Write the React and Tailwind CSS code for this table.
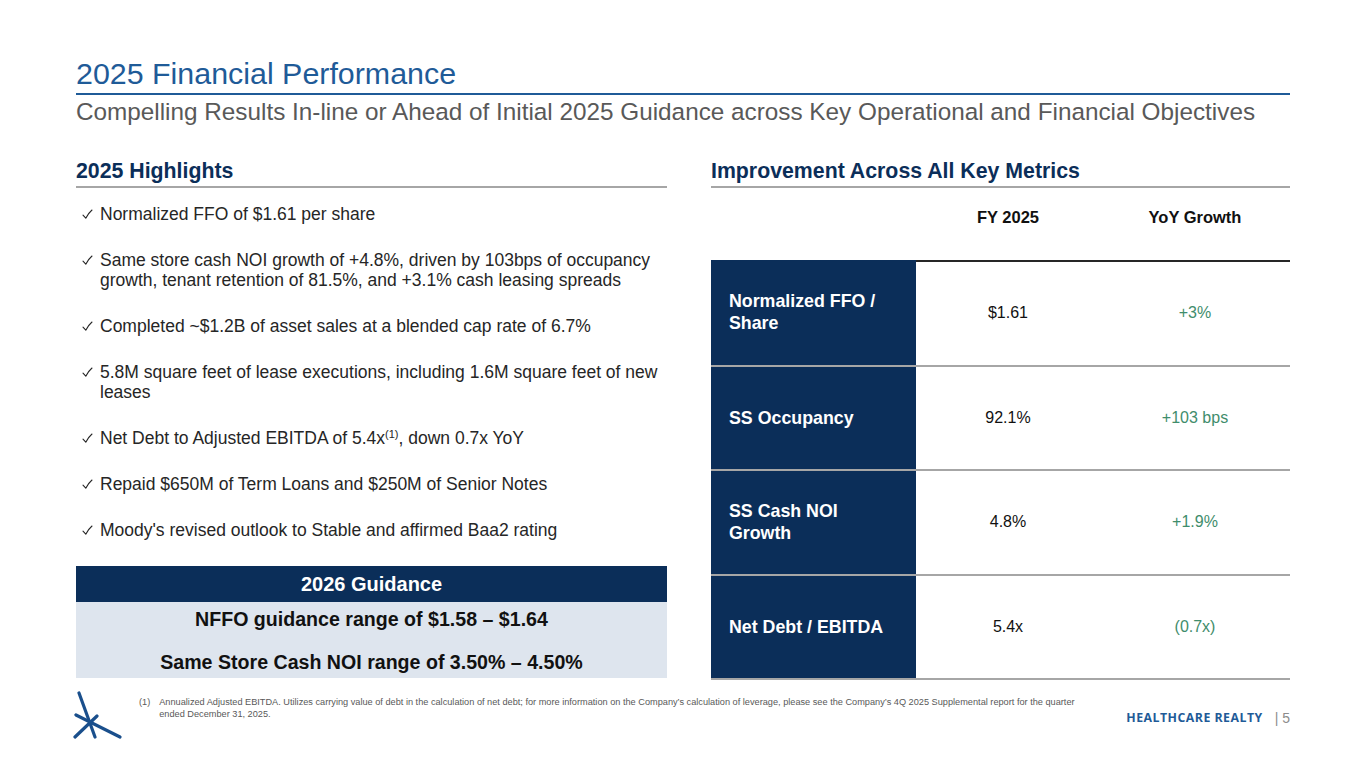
import React from 'react';

const navy = 'bg-[#0b2e59]';

const highlights = [
    ['Normalized FFO of $1.61 per share'],
    ['Same store cash NOI growth of +4.8%, driven by 103bps of occupancy', 'growth, tenant retention of 81.5%, and +3.1% cash leasing spreads'],
    ['Completed ~$1.2B of asset sales at a blended cap rate of 6.7%'],
    ['5.8M square feet of lease executions, including 1.6M square feet of new', 'leases'],
    'ebitda',
    ['Repaid $650M of Term Loans and $250M of Senior Notes'],
    ["Moody's revised outlook to Stable and affirmed Baa2 rating"],
];

const metrics = [
    { label: ['Normalized FFO /', 'Share'], value: '$1.61', growth: '+3%' },
    { label: ['SS Occupancy'], value: '92.1%', growth: '+103 bps' },
    { label: ['SS Cash NOI', 'Growth'], value: '4.8%', growth: '+1.9%' },
    { label: ['Net Debt / EBITDA'], value: '5.4x', growth: '(0.7x)' },
];

const Check = () => (
    <svg width="11" height="11" viewBox="0 0 11 11" className="mt-[5px] shrink-0">
        <path d="M1 6.2 L3.8 9.2 Q6 4.5 10 1" fill="none" stroke="#262626" strokeWidth="1.1" strokeLinecap="round" strokeLinejoin="round" />
    </svg>
);

const Logo = () => (
    <svg width="50" height="50" viewBox="0 0 50 50" className="shrink-0">
        <g stroke="#1a4f8c" strokeWidth="3.2" strokeLinecap="round">
            <line x1="6" y1="2" x2="22" y2="46" />
            <line x1="2" y1="46" x2="24" y2="25" />
            <line x1="3" y1="24" x2="47" y2="46" />
        </g>
    </svg>
);

export default function App() {
    return (
        <div className="w-[1365px] h-[767px] bg-white overflow-hidden font-['Liberation_Sans',Arial,sans-serif] flex flex-col">
            {/* Title */}
            <div className="pl-[76px] pr-[75px] pt-[56px]">
                <h1 className="text-[30.4px] leading-[34px] text-[#1f5b98] pb-[3px] border-b-2 border-[#1f5b98]">2025 Financial Performance</h1>
                <p className="mt-[3px] text-[24.3px] leading-[28px] text-[#595959] whitespace-nowrap">
                    Compelling Results In-line or Ahead of Initial 2025 Guidance across Key Operational and Financial Objectives
                </p>
            </div>

            <div className="pl-[76px] pr-[75px] mt-[33px] flex gap-[44px]">
                {/* Left column */}
                <div className="w-[591px] flex flex-col">
                    <h2 className="text-[21.3px] leading-[24px] font-bold text-[#0b2e59] pb-[3px] border-b-2 border-[#a6a6a6]">2025 Highlights</h2>
                    <ul className="mt-[16px] pl-[6px] flex flex-col gap-[26px] text-[17.5px] leading-[20px] text-[#262626]">
                        {highlights.map((h, i) => (
                            <li key={i} className="flex gap-[7px]">
                                <Check />
                                {h === 'ebitda' ? (
                                    <span>Net Debt to Adjusted EBITDA of 5.4x<sup className="text-[11px] relative -top-[6px]">(1)</sup>, down 0.7x YoY</span>
                                ) : (
                                    <span className="flex flex-col whitespace-nowrap">
                                        {h.map((l) => <span key={l}>{l}</span>)}
                                    </span>
                                )}
                            </li>
                        ))}
                    </ul>
                    <div className="mt-[26px]">
                        <div className={`${navy} h-[36px] flex items-center justify-center text-white font-bold text-[20px]`}>2026 Guidance</div>
                        <div className="bg-[#dee5ee] h-[76px] pt-[6px] flex flex-col items-center gap-[21px] text-[19.6px] leading-[22px] font-bold text-[#111] whitespace-nowrap">
                            <span>NFFO guidance range of $1.58 – $1.64</span>
                            <span>Same Store Cash NOI range of 3.50% – 4.50%</span>
                        </div>
                    </div>
                </div>

                {/* Right column */}
                <div className="w-[579px] flex flex-col">
                    <h2 className="text-[21.3px] leading-[24px] font-bold text-[#0b2e59] pb-[3px] border-b-2 border-[#a6a6a6]">Improvement Across All Key Metrics</h2>
                    <div className="grid grid-cols-[205px_184px_190px] h-[72px] pt-[19px] text-[16.5px] leading-[20px] font-bold text-[#111]">
                        <span />
                        <span className="text-center">FY 2025</span>
                        <span className="text-center">YoY Growth</span>
                    </div>
                    <div className="border-b-2 border-[#a6a6a6]">
                        {metrics.map((m, i) => (
                            <div key={i} className={`grid grid-cols-[205px_184px_190px] h-[104.5px] text-[16px] leading-[20px] ${i > 0 ? 'border-t-2 border-[#a6a6a6]' : ''}`}>
                                <div className={`${navy} pl-[18px] flex flex-col justify-center font-bold text-white text-[17.8px] leading-[22px] whitespace-nowrap`}>
                                    {m.label.map((l) => <span key={l}>{l}</span>)}
                                </div>
                                <div className={`flex items-center justify-center text-[#111] ${i === 0 ? 'border-t-2 border-[#262626]' : ''}`}>{m.value}</div>
                                <div className={`flex items-center justify-center text-[#3f8d6c] ${i === 0 ? 'border-t-2 border-[#262626]' : ''}`}>{m.growth}</div>
                            </div>
                        ))}
                    </div>
                </div>
            </div>

            {/* Footer */}
            <div className="pl-[73px] pr-[75px] mt-[11px] flex items-start">
                <Logo />
                <div className="ml-[16px] mt-[5px] flex gap-[9px] text-[9.2px] leading-[12px] text-[#595959]">
                    <span>(1)</span>
                    <span className="flex flex-col whitespace-nowrap">
                        <span>Annualized Adjusted EBITDA. Utilizes carrying value of debt in the calculation of net debt; for more information on the Company’s calculation of leverage, please see the Company’s 4Q 2025 Supplemental report for the quarter</span>
                        <span>ended December 31, 2025.</span>
                    </span>
                </div>
                <div className="ml-auto mt-[17px] flex items-center gap-[12px]">
                    <span className="font-['Open_Sans',sans-serif] font-bold text-[12.3px] tracking-[0.04em] text-[#1f5b98]">HEALTHCARE REALTY</span>
                    <span className="text-[14px] text-[#8c8c8c]">| 5</span>
                </div>
            </div>
        </div>
    );
}
